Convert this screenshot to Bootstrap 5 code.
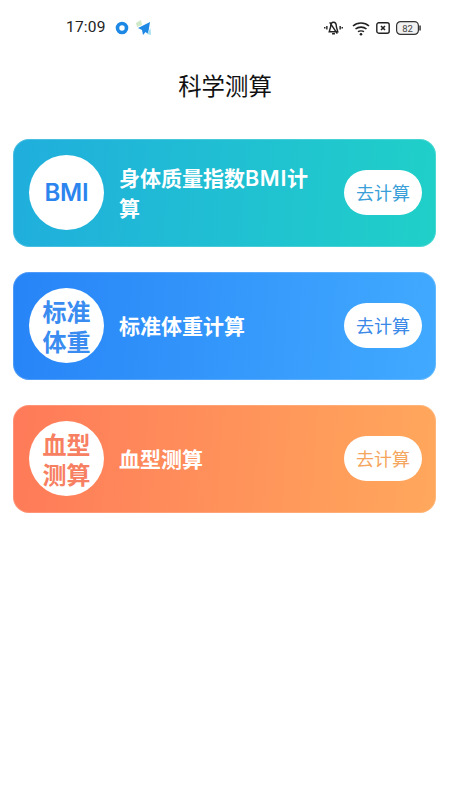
<!DOCTYPE html>
<html lang="zh">
<head>
<meta charset="utf-8">
<link href="https://cdn.jsdelivr.net/npm/bootstrap@5.3.0/dist/css/bootstrap.min.css" rel="stylesheet">
<style>
html,body{margin:0;background:#fff;overflow:hidden}
body{width:450px;height:800px;font-family:"Noto Sans CJK SC","Noto Sans",sans-serif;color:#111}
.sbar{height:56px;padding:0 29px 0 66px;font-family:Roboto,sans-serif}
.stime{font-size:15.500px;letter-spacing:.2px;color:#222;width:49px;line-height:1}
.ic-a{margin-left:0}.ic-b{margin-left:6px}.ic-c{margin-left:9px}.ic-d{margin-left:6px}.ic-e{margin-left:6px}
.ptitle{height:60px;font-size:23.400px;line-height:58px;color:#111;margin-bottom:22.500px}
.calc{height:108px;margin:0 14px 25px 13px;border-radius:16px;padding:0 14px 0 16px;color:#fff;box-shadow:inset 0 0 0 1px rgba(255,255,255,.18)}
.calc1{background:linear-gradient(95deg,#20aedd,#20d0c8)}
.calc2{background:linear-gradient(95deg,#2784f7,#41aaff)}
.calc3{background:linear-gradient(95deg,#ff7a59,#ffa85c)}
.disc{width:75px;height:75px;flex:0 0 75px;background:#fff;font-size:24px;font-weight:700;line-height:30px}
.disc-en{font-family:Inter,"Noto Sans",sans-serif;font-size:24px;font-weight:600;letter-spacing:-.2px}
.c1{color:#2c84ee}.c2{color:#3a8cf0}.c3{color:#f78062}
.cname{font-size:21px;font-weight:700;line-height:29.500px;padding-left:15px;padding-right:20px}
.cname-en{font-family:Inter,sans-serif;font-weight:600;font-size:21.500px;letter-spacing:.7px;line-height:1}
.go{width:78px;height:45px;flex:0 0 78px;background:#fff;border-radius:23px;font-size:18px}
.g1{color:#3a9fd8}.g2{color:#3a88e8}.g3{color:#f5a65e}
</style>
</head>
<body>
<div class="sbar d-flex align-items-center">
  <span class="stime">17:09</span>
  <svg class="ic-a" width="14" height="14" viewBox="0 0 14 14"><circle cx="7" cy="7" r="4.500" fill="none" stroke="#1e88e5" stroke-width="3.600"/></svg>
  <svg class="ic-b" width="17" height="18" viewBox="0 0 17 18"><path d="M1 4 6 1 7 6 2 8Z" fill="#cfe8c8"/><path d="M15 3 3 9l4 2 1 5 2.500-3 2.500 2Z" fill="#1e88e5"/><path d="M12 15 15.500 9 16 16Z" fill="#a5e0ee"/></svg>
  <span class="flex-grow-1"></span>
  <svg width="19" height="16" viewBox="0 0 20 16" fill="none" stroke="#222" stroke-width="1.500"><path d="M10 2c-2 0-3 2-3 4.500L5.500 12h9L13 6.500C13 4 12 2 10 2ZM8.500 14h3M6 2l8 12M3 6v3.500M17 6v3.500M.8 7v1.500M19.200 7v1.500"/></svg>
  <svg class="ic-c" width="18" height="15" viewBox="0 0 18 15" fill="none" stroke="#222" stroke-width="1.600"><path d="M1 5c4.500-4 11.500-4 16 0M3.500 8c3-2.500 8-2.500 11 0M6 10.700c1.500-1 4.500-1 6 0"/><circle cx="9" cy="13.300" r="1.300" fill="#222" stroke="none"/></svg>
  <svg class="ic-d" width="14" height="12" viewBox="0 0 14 12" fill="none" stroke="#222" stroke-width="1.400"><rect x=".8" y=".8" width="12.400" height="10.400" rx="2"/><path d="M5 4l4 4M9 4 5 8" stroke-width="1.600"/></svg>
  <svg class="ic-e" width="25" height="14" viewBox="0 0 25 14"><rect x=".6" y=".6" width="21.800" height="12.800" rx="4" fill="#f1f1f1" stroke="#333" stroke-width="1.200"/><rect x="23.300" y="4.500" width="1.500" height="5" fill="#333"/><text x="11.500" y="10.500" font-size="9.500" font-family="Roboto,sans-serif" text-anchor="middle" fill="#444">82</text></svg>
</div>
<h1 class="ptitle text-center fw-normal">科学测算</h1>
<div class="calc calc1 d-flex align-items-center">
  <div class="disc rounded-circle d-flex align-items-center justify-content-center text-center c1 disc-en">BMI</div>
  <div class="cname flex-grow-1">身体质量指数<span class="cname-en">BMI</span>计算</div>
  <div class="go d-flex align-items-center justify-content-center g1">去计算</div>
</div>
<div class="calc calc2 d-flex align-items-center">
  <div class="disc rounded-circle d-flex align-items-center justify-content-center text-center c2"><span>标准<br>体重</span></div>
  <div class="cname flex-grow-1">标准体重计算</div>
  <div class="go d-flex align-items-center justify-content-center g2">去计算</div>
</div>
<div class="calc calc3 d-flex align-items-center">
  <div class="disc rounded-circle d-flex align-items-center justify-content-center text-center c3"><span>血型<br>测算</span></div>
  <div class="cname flex-grow-1">血型测算</div>
  <div class="go d-flex align-items-center justify-content-center g3">去计算</div>
</div>
<script src="https://cdn.jsdelivr.net/npm/bootstrap@5.3.0/dist/js/bootstrap.bundle.min.js"></script>
</body>
</html>
